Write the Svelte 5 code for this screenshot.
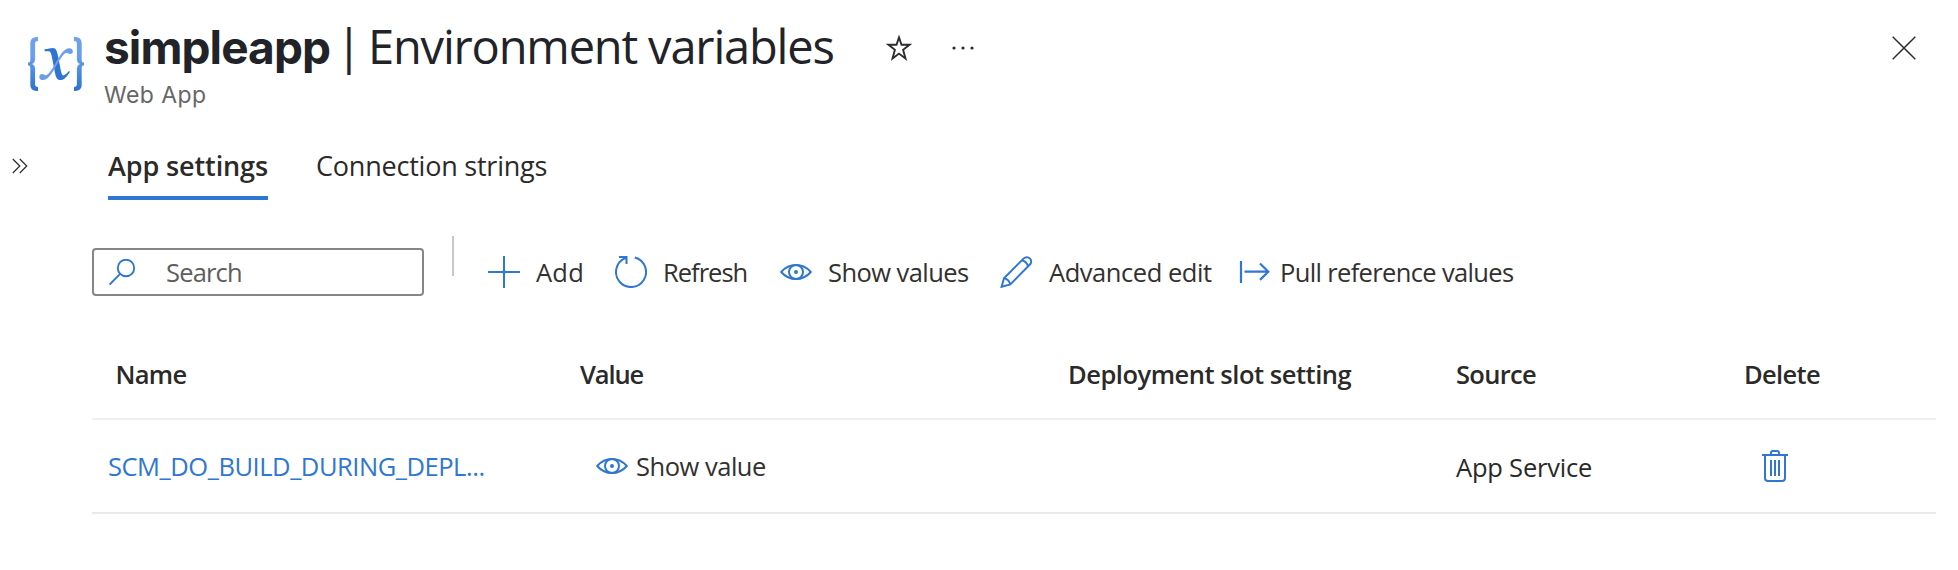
<script>
  const rows = [{ name: 'SCM_DO_BUILD_DURING_DEPL...', source: 'App Service' }];
</script>

{#snippet eye()}
  <svg class="eye" width="32" height="32" viewBox="0 0 32 32" fill="none" stroke="currentColor" stroke-width="2">
    <path d="M1.2 16C5 11.6 10.2 9 16 9s11 2.6 14.8 7C27 20.4 21.800 23 16 23S5 20.400 1.200 16z" stroke-linejoin="round" />
    <circle cx="16" cy="16" r="7" />
    <circle cx="16" cy="16" r="2" fill="currentColor" stroke="none" />
  </svg>
{/snippet}

<div class="page">
  <header>
    <svg class="logo" width="56" height="54" viewBox="0 0 56 54" fill="none">
      <defs>
        <linearGradient id="brace" x1="0" y1="0" x2="0" y2="54" gradientUnits="userSpaceOnUse">
          <stop offset="0" stop-color="#6ea2ee" />
          <stop offset="0.35" stop-color="#6a9fec" />
          <stop offset="1" stop-color="#2c72cc" />
        </linearGradient>
      </defs>
      <g fill="url(#brace)">
        <path d="M10 0v4C7.600 4.200 7.100 5 7.100 7.200V21.500c0 3-1 4.500-3 5.500 2 1 3 2.500 3 5.500v14.300c0 2.200.5 3 2.900 3.200v4C4.800 54 2.300 52 2.300 47.500V30.700C2.300 29 1.600 28.500 0 28.500v-3c1.600 0 2.300-.5 2.300-2.200V6.500C2.300 2 4.800 0 10 0z" />
        <path d="M46 0v4c2.400.2 2.900 1 2.900 3.200V21.500c0 3 1 4.500 3 5.500-2 1-3 2.500-3 5.500v14.300c0 2.200-.5 3-2.900 3.200v4c5.200 0 7.700-2 7.700-6.500V30.700c0-1.700.7-2.200 2.300-2.200v-3c-1.600 0-2.300-.5-2.300-2.200V6.500C53.700 2 51.200 0 46 0z" />
      </g>
      <path d="M16.500 12.300c3.800-.3 5.800-1.200 8.300-1.200 3.300 0 4.300 3.200 5.200 8l2.500 13c.7 3.600 1.500 6.400 2.700 6.400 1.600 0 3.700-2.200 5.800-4.500l1 .8c-2.800 4.700-6.100 8.300-9.400 8.300-4 0-4.900-3.700-5.900-8.700l-2.300-12c-1-5-1.500-8.200-3.800-8.200-1.300 0-2.600.1-4 .1z" fill="#2e75d2" />
      <path d="M44.900 14.500c0 1.500-1.200 2.500-2.700 2.500-1.700 0-2.300-1.300-3.600-1.300-2.300 0-5.300 4.500-9.200 11-4.800 8-8.700 16.300-14.600 16.300-2.200 0-3.500-1.200-3.500-3.100 0-1.600 1.100-2.900 2.800-2.900 1.900 0 2.200 1.300 3.600 1.300 2.200 0 5.400-4.600 9.200-11C31.500 19.300 35.500 11.200 41.500 11.200c2 0 3.400 1.300 3.400 3.300z" fill="#6b9eeb" />
    </svg>
    <div class="heading">
      <div class="title">
        <span class="app">simpleapp</span>
        <span class="bar">|</span>
        <span class="section">Environment variables</span>
      </div>
      <div class="subtitle">Web App</div>
    </div>
    <svg class="star" width="26" height="28" viewBox="0 0 26 28" fill="none" stroke="#2b2b30" stroke-width="1.9">
      <path d="M13 3.400l2.500 7.400h8l-6.400 5 2.400 8.800-6.500-5-6.500 5 2.400-8.800-6.400-5h8z" />
    </svg>
    <svg class="dots" width="22" height="4" viewBox="0 0 22 4" fill="#2b2b30">
      <circle cx="2" cy="2" r="1.600" /><circle cx="11" cy="2" r="1.600" /><circle cx="20" cy="2" r="1.600" />
    </svg>
    <svg class="close" width="24" height="24" viewBox="0 0 24 24" fill="none" stroke="#2b2b30" stroke-width="1.500">
      <path d="M.7.700l22.600 22.600M23.300.7L.7 23.300" />
    </svg>
  </header>

  <nav>
    <svg class="expand" width="16" height="16" viewBox="0 0 16 16" fill="none" stroke="#2b2b2b" stroke-width="1.200">
      <path d="M.8 1l7 7-7 7M7.800 1l7 7-7 7" />
    </svg>
    <button class="tab active"><span>App settings</span></button>
    <button class="tab second"><span>Connection strings</span></button>
  </nav>

  <div class="toolbar">
    <div class="search">
      <svg width="28" height="28" viewBox="0 0 28 28" fill="none" stroke="currentColor" stroke-width="1.900">
        <circle cx="17" cy="9" r="8.200" /><path d="M11.200 14.800L.6 25.500" />
      </svg>
      <span>Search</span>
    </div>
    <i class="divider"></i>
    <button class="cmd add">
      <svg width="32" height="32" viewBox="0 0 32 32" fill="none" stroke="currentColor" stroke-width="2"><path d="M16 0v32M0 16h32" /></svg>
      <span>Add</span>
    </button>
    <button class="cmd refresh">
      <svg width="32" height="32" viewBox="0 0 32 32" fill="none" stroke="currentColor" stroke-width="2">
        <path d="M19.800 1.500A15 15 0 1 1 10.200 2.200L12 1.500M4 1h7.500v7" />
      </svg>
      <span>Refresh</span>
    </button>
    <button class="cmd show">{@render eye()}<span>Show values</span></button>
    <button class="cmd edit">
      <svg width="33" height="32" viewBox="0 0 33 32" fill="none" stroke="currentColor" stroke-width="2">
        <path d="M1.600 30.800L4 22.200 23.800 2.400a4.300 4.300 0 0 1 6.100 0a4.300 4.300 0 0 1 0 6.100L10.300 28.400zM4 22.200c3.200.5 5.400 2.800 6.300 6.200M22 4.400c3.300.6 5.300 2.600 6 6" />
      </svg>
      <span>Advanced edit</span>
    </button>
    <button class="cmd pull">
      <svg width="32" height="24" viewBox="0 0 32 24" fill="none" stroke="currentColor" stroke-width="2.200">
        <path d="M2 1v22M5.500 11.700h23.500M21 3.500l8.300 8.200L21 19.900" />
      </svg>
      <span>Pull reference values</span>
    </button>
  </div>

  <div class="table">
    <div class="tr head">
      <span class="name">Name</span><span class="value">Value</span><span class="slot">Deployment slot setting</span><span class="source">Source</span><span class="delete">Delete</span>
    </div>
    {#each rows as row}
      <div class="tr">
        <a class="link" href="#setting">{row.name}</a>
        <button class="reveal">{@render eye()}<span>Show value</span></button>
        <span></span>
        <span class="service">{row.source}</span>
        <svg class="trash" width="26" height="32" viewBox="0 0 26 32" fill="none" stroke="currentColor" stroke-width="2">
          <path d="M0 5h26M9 5V3a2 2 0 0 1 2-2h4a2 2 0 0 1 2 2v2M3 5v23a3 3 0 0 0 3 3h14a3 3 0 0 0 3-3V5M9 10v16M13 10v16M17 10v16" />
        </svg>
      </div>
    {/each}
  </div>
</div>

<style>
  :global(body) { background: #fff; }
  .page { width: 1958px; height: 570px; overflow: hidden; box-sizing: border-box; background: #fff; color: #2b2a29; font: 25.5px/36px "Open Sans", "Noto Sans", sans-serif; }
  button { all: unset; box-sizing: border-box; white-space: nowrap; }
  svg { display: block; flex: none; }
  span { white-space: nowrap; }

  header { display: flex; align-items: flex-start; height: 140px; padding: 0 42px 0 28px; box-sizing: border-box; }
  .logo { margin-top: 37px; }
  .heading { width: 782px; margin: 11px 0 0 20px; }
  .title { display: flex; align-items: baseline; height: 71px; line-height: 70px; color: #222328; }
  .app { width: 232px; font: 700 46px/70px Inter, sans-serif; letter-spacing: -0.9px; }
  .bar { width: 32px; font-size: 47px; }
  .section { font-size: 47px; letter-spacing: -1.18px; }
  .subtitle { color: #666; font: 23px/26px Inter, sans-serif; letter-spacing: 0.43px; }
  .star { margin-top: 34px; }
  .dots { margin: 46px 0 0 40px; }
  .close { margin: 36px 0 0 auto; }

  nav { display: flex; align-items: flex-start; height: 96px; padding-left: 12px; }
  .expand { margin-top: 18px; }
  .tab { display: flex; align-items: flex-start; height: 60px; font-size: 27px; line-height: 52px; }
  .active { width: 160px; margin-left: 80px; border-bottom: 4px solid #2f77d1; font-weight: 600; letter-spacing: -0.11px; }
  .second { margin-left: 48px; letter-spacing: -0.22px; }

  .toolbar { display: flex; align-items: flex-start; height: 102px; padding-left: 92px; }
  .search { display: flex; box-sizing: border-box; width: 332px; height: 48px; margin-top: 12px; padding: 9px 0 0 15px; border: 2px solid #868686; border-radius: 4px; color: #2f77d1; }
  .search span { height: 48px; margin: -11px 0 0 29px; color: #5f5e5d; line-height: 48px; letter-spacing: -0.82px; }
  .divider { width: 2px; height: 40px; margin-left: 28px; background: #c8c8c8; }
  .cmd { display: flex; align-items: center; height: 32px; margin-top: 20px; color: #2f77d1; }
  .cmd span { color: #323130; line-height: 32px; }
  .add { width: 127px; margin-left: 34px; }
  .add span { margin-left: 16px; letter-spacing: 0.2px; }
  .refresh { width: 165px; }
  .refresh span { margin-left: 16px; letter-spacing: -1px; }
  .show { width: 220px; }
  .show span { margin-left: 16px; letter-spacing: -0.56px; }
  .edit { width: 238.500px; }
  .edit span { margin-left: 16px; letter-spacing: -0.45px; }
  .pull span { margin-left: 9.500px; letter-spacing: -0.65px; }

  .table { width: 1844px; margin-left: 92px; }
  .tr { display: grid; grid-template-columns: 488px 488px 388px 288px 1fr; height: 94px; box-sizing: border-box; border-bottom: 2px solid #e9e9e9; }
  .head { height: 82px; border-color: #f0f0f0; font-weight: 600; line-height: 72px; }
  .name { padding-left: 23.500px; letter-spacing: -0.7px; }
  .value { letter-spacing: -1.120px; }
  .slot { letter-spacing: -0.47px; }
  .source { letter-spacing: -0.69px; }
  .delete { letter-spacing: -0.65px; }
  .link { margin-left: 16px; white-space: nowrap; color: #2f77d1; line-height: 92px; letter-spacing: -0.46px; text-decoration: none; }
  .reveal { display: flex; align-items: center; height: 92px; padding-left: 16px; color: #2f77d1; }
  .reveal span { margin: 1px 0 0 8px; color: #323130; line-height: 93px; letter-spacing: -0.48px; }
  .service { line-height: 94px; letter-spacing: -0.21px; }
  .trash { margin: 30px 0 0 18px; color: #2f77d1; }
</style>
